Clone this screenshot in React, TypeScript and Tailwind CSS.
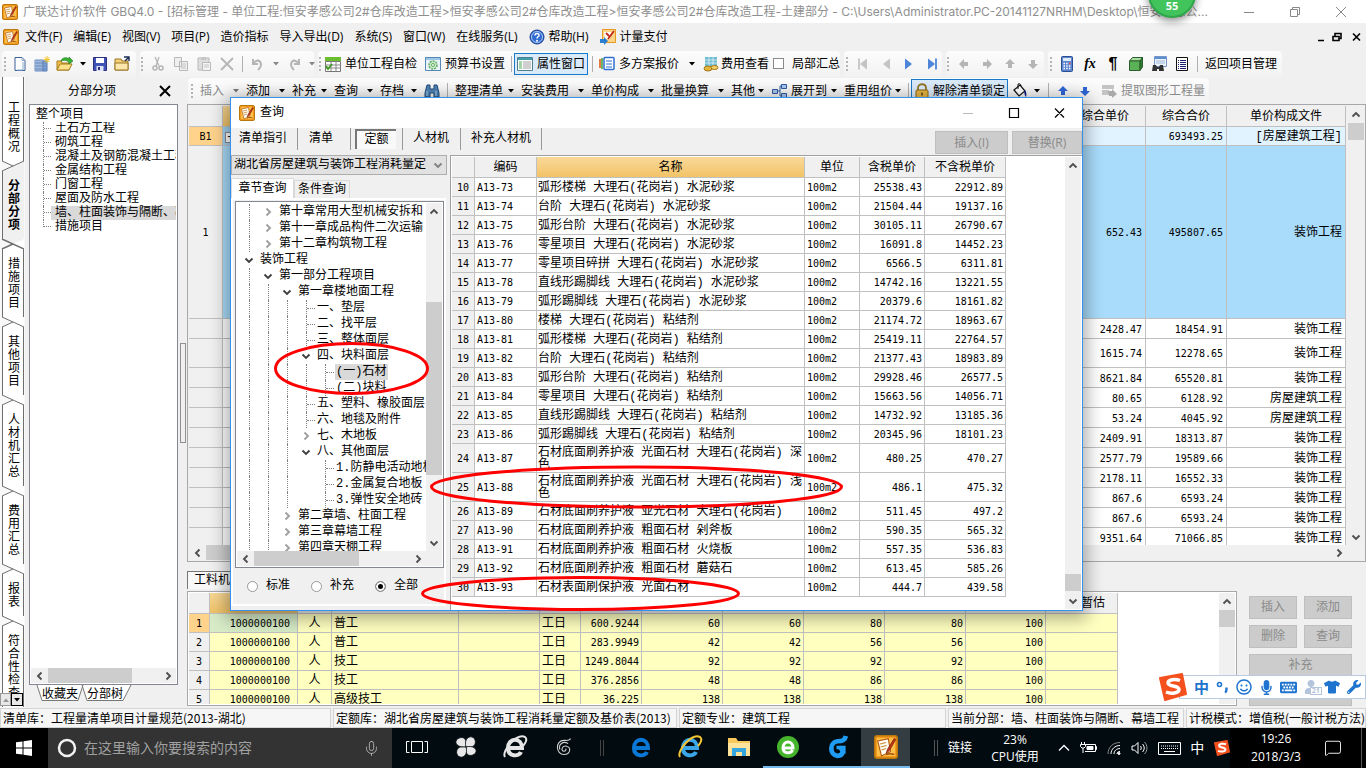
import React, { useState } from 'react';
import { FaMicrophone, FaKeyboard, FaTshirt, FaWrench, FaRegSmile, FaUser } from 'react-icons/fa';
import { MessageSquare, Mic } from 'lucide-react';

type Row = string[];

const song = "[font-family:'Liberation_Mono','Noto_Sans_CJK_SC',monospace]";
const num = "[font-family:'DejaVu_Sans_Mono','Noto_Sans_CJK_SC',monospace] text-[10px]";

const sections = ['土石方工程', '砌筑工程', '混凝土及钢筋混凝土工程', '金属结构工程', '门窗工程', '屋面及防水工程', '墙、柱面装饰与隔断、幕', '措施项目'];

const sideTabs = ['工程概况', '分部分项', '措施项目', '其他项目', '人材机汇总', '费用汇总', '报表', '符合性检查'];

const priceRows: Row[] = [
  ['2428.47', '18454.91', '装饰工程', 'h-[20px]'],
  ['1615.74', '12278.65', '装饰工程', 'h-[29px]'],
  ['8621.84', '65520.81', '装饰工程', 'h-[20px]'],
  ['80.65', '6128.92', '房屋建筑工程', 'h-[20px]'],
  ['53.24', '4045.92', '房屋建筑工程', 'h-[20px]'],
  ['2409.91', '18313.87', '装饰工程', 'h-[20px]'],
  ['2577.79', '19589.66', '装饰工程', 'h-[20px]'],
  ['2178.11', '16552.33', '装饰工程', 'h-[20px]'],
  ['867.6', '6593.24', '装饰工程', 'h-[20px]'],
  ['867.6', '6593.24', '装饰工程', 'h-[20px]'],
  ['9351.64', '71066.85', '装饰工程', 'h-[20px]'],
];

const quotas: Row[] = [
  ['10', 'A13-73', '弧形楼梯 大理石(花岗岩) 水泥砂浆', '25538.43', '22912.89'],
  ['11', 'A13-74', '台阶 大理石(花岗岩) 水泥砂浆', '21504.44', '19137.16'],
  ['12', 'A13-75', '弧形台阶 大理石(花岗岩) 水泥砂浆', '30105.11', '26790.67'],
  ['13', 'A13-76', '零星项目 大理石(花岗岩) 水泥砂浆', '16091.8', '14452.23'],
  ['14', 'A13-77', '零星项目碎拼 大理石(花岗岩) 水泥砂浆', '6566.5', '6311.81'],
  ['15', 'A13-78', '直线形踢脚线 大理石(花岗岩) 水泥砂浆', '14742.16', '13221.55'],
  ['16', 'A13-79', '弧形踢脚线 大理石(花岗岩) 水泥砂浆', '20379.6', '18161.82'],
  ['17', 'A13-80', '楼梯 大理石(花岗岩) 粘结剂', '21174.72', '18963.67'],
  ['18', 'A13-81', '弧形楼梯 大理石(花岗岩) 粘结剂', '25419.11', '22764.57'],
  ['19', 'A13-82', '台阶 大理石(花岗岩) 粘结剂', '21377.43', '18983.89'],
  ['20', 'A13-83', '弧形台阶 大理石(花岗岩) 粘结剂', '29928.46', '26577.5'],
  ['21', 'A13-84', '零星项目 大理石(花岗岩) 粘结剂', '15663.56', '14056.71'],
  ['22', 'A13-85', '直线形踢脚线 大理石(花岗岩) 粘结剂', '14732.92', '13185.36'],
  ['23', 'A13-86', '弧形踢脚线 大理石(花岗岩) 粘结剂', '20345.96', '18101.23'],
  ['24', 'A13-87', '石材底面刷养护液 光面石材 大理石(花岗岩) 深色', '480.25', '470.27'],
  ['25', 'A13-88', '石材底面刷养护液 光面石材 大理石(花岗岩) 浅色', '486.1', '475.32'],
  ['26', 'A13-89', '石材底面刷养护液 亚光石材 大理石(花岗岩)', '511.45', '497.2'],
  ['27', 'A13-90', '石材底面刷养护液 粗面石材 剁斧板', '590.35', '565.32'],
  ['28', 'A13-91', '石材底面刷养护液 粗面石材 火烧板', '557.35', '536.83'],
  ['29', 'A13-92', '石材底面刷养护液 粗面石材 蘑菇石', '613.45', '585.26'],
  ['30', 'A13-93', '石材表面刷保护液 光面石材', '444.7', '439.58'],
];

const labour: Row[] = [
  ['普工', '600.9244', '60', '60', '80', '80', '100'],
  ['普工', '283.9949', '42', '42', '56', '56', '100'],
  ['技工', '1249.8044', '92', '92', '92', '92', '100'],
  ['技工', '376.2856', '48', '48', '86', '86', '100'],
  ['高级技工', '36.225', '138', '138', '138', '138', '100'],
];

interface Node {
  level: number;
  label: string;
  state: 'open' | 'closed' | 'leaf';
  skip?: number; // ancestor level whose guide has ended
}

const chapters: Node[] = [
  { level: 1, label: '第十章常用大型机械安拆和', state: 'closed' },
  { level: 1, label: '第十一章成品构件二次运输', state: 'closed' },
  { level: 1, label: '第十二章构筑物工程', state: 'closed' },
  { level: 0, label: '装饰工程', state: 'open' },
  { level: 1, label: '第一部分工程项目', state: 'open' },
  { level: 2, label: '第一章楼地面工程', state: 'open' },
  { level: 3, label: '一、垫层', state: 'leaf' },
  { level: 3, label: '二、找平层', state: 'leaf' },
  { level: 3, label: '三、整体面层', state: 'leaf' },
  { level: 3, label: '四、块料面层', state: 'open' },
  { level: 4, label: '(一)石材', state: 'leaf' },
  { level: 4, label: '(二)块料', state: 'leaf' },
  { level: 3, label: '五、塑料、橡胶面层', state: 'leaf' },
  { level: 3, label: '六、地毯及附件', state: 'leaf' },
  { level: 3, label: '七、木地板', state: 'closed' },
  { level: 3, label: '八、其他面层', state: 'open' },
  { level: 4, label: '1.防静电活动地板', state: 'leaf', skip: 3 },
  { level: 4, label: '2.金属复合地板', state: 'leaf', skip: 3 },
  { level: 4, label: '3.弹性安全地砖', state: 'leaf', skip: 3 },
  { level: 2, label: '第二章墙、柱面工程', state: 'closed' },
  { level: 2, label: '第三章幕墙工程', state: 'closed' },
  { level: 2, label: '第四章天棚工程', state: 'closed' },
];

const AppLogo = ({ size = 16 }: { size?: number }) => (
  <svg width={size} height={size} viewBox="0 0 16 16" className="shrink-0">
    <rect x=".5" y=".5" width="15" height="15" rx="1.5" fill="#f59a1c" stroke="#b9770c" />
    <path d="M2 2h12v12H2z" fill="#fbc04a" />
    <path d="M2.5 4l7-1.5 1.5 8.5-6 3z" fill="#fffdf4" stroke="#b0560f" strokeWidth=".7" />
    <path d="M4 6l4-1M4.4 8l4-1M5 10l3-1" stroke="#c98b3a" strokeWidth=".8" />
    <path d="M13.5 2.2L9 9.5l-.8 2.6L10.5 10l4-7z" fill="#c4341c" stroke="#7d2208" strokeWidth=".5" />
    <path d="M8 13c2-.8 4-.5 5.500 0" stroke="#a4500a" fill="none" />
  </svg>
);

const Chevron = ({ dir, className = 'text-[#505050]' }: { dir: 'up' | 'down' | 'left' | 'right'; className?: string }) => {
  const d = { up: 'M1.500 6.500L5 3l3.500 3.500', down: 'M1.500 3.500L5 7l3.500-3.500', left: 'M6.500 1.500L3 5l3.500 3.500', right: 'M3.500 1.500L7 5 3.500 8.500' };
  return (
    <svg width="10" height="10" viewBox="0 0 10 10" className={`shrink-0 ${className}`}>
      <path d={d[dir]} fill="none" stroke="currentColor" strokeWidth="1.9" />
    </svg>
  );
};

const Arrow = ({ className = 'text-black' }: { className?: string }) => (
  <svg width="6" height="4" viewBox="0 0 6 4" className={`shrink-0 ${className}`}>
    <path d="M0 0h6L3 3.500z" fill="currentColor" />
  </svg>
);

const Grip = () => (
  <span className="flex flex-col gap-[2px] shrink-0 w-[2px]">
    {[0, 1, 2, 3].map(i => <span key={i} className="size-[2px] bg-[#b4b4b4]" />)}
  </span>
);

const Sep = () => <span className="w-px h-4 bg-[#b0b0b0] shrink-0" />;

const Svg = ({ children, className = '' }: { children: React.ReactNode; className?: string }) => (
  <svg width="16" height="16" viewBox="0 0 16 16" fill="none" className={`shrink-0 ${className}`}>{children}</svg>
);

const NewIcon = () => <Svg><path d="M3 1.500h7l3 3v10H3z" fill="#fff" stroke="#3a5f94" /><path d="M10 1.500v3h3M11 6v8H5" stroke="#8aa9cf" /></Svg>;
const BuildingIcon = () => <Svg><path d="M1 4h8v11H1z" fill="#d5e4f7" stroke="#6a8cc0" /><path d="M9 5h4v10H9z" fill="#7fa3d9" stroke="#5479b4" /><path d="M3 4v11M5 4v11M7 4v11M1 7h12M1 10h12M1 13h12" stroke="#6a8cc0" /><path d="M13 0v7M9.500 3.500h7M10.500 1l5 5M15.500 1l-5 5" stroke="#f2c52c" /></Svg>;
const OpenIcon = () => <svg width="18" height="16" viewBox="0 0 18 16" className="shrink-0"><path d="M1 14V5h4l1 2h7v7z" fill="#f0c04a" stroke="#a57a18" /><path d="M1 14l3-6h12l-3 6z" fill="#fde28c" stroke="#a57a18" /><path d="M5 5c1-4 6-4 8-2V1l4 4-4 3V6c-3-2-5-2-8-1z" fill="#37b332" stroke="#1b751b" strokeWidth=".6" /></svg>;
const SaveIcon = () => <Svg><path d="M1.500 1.500h13v13h-13z" fill="#4054b8" stroke="#2b2f80" /><path d="M4 2h8v5H4z" fill="#fff" /><path d="M4.500 10h7v5h-7z" fill="#dfe5f5" /><path d="M6 11h2v3H6z" fill="#2b2f80" /></Svg>;
const FolderIcon = () => <Svg><path d="M1 3h6l1 2h6v9H1z" fill="#f3d27c" stroke="#997422" /><path d="M1 7h13v7H1z" fill="#fbe7ab" stroke="#997422" /><path d="M10 1h5v4M15 1l-4 4" stroke="#1b2c55" strokeWidth="1.400" /></Svg>;
const CutIcon = () => <Svg><path d="M5 1l4 9M9 1L6 10" stroke="#b5b5b5" strokeWidth="1.300" /><circle cx="5" cy="12" r="2" stroke="#b5b5b5" strokeWidth="1.500" /><circle cx="11" cy="12" r="2" stroke="#b5b5b5" strokeWidth="1.500" /></Svg>;
const CopyIcon = () => <Svg><path d="M1.500 1.500h7v9h-7zM6.500 5.500h8v9h-8z" fill="#efefef" stroke="#b9b9b9" /><path d="M8 8h5M8 10h5M8 12h5" stroke="#c4c4c4" /></Svg>;
const PasteIcon = () => <Svg><path d="M2 2h11v12H2z" fill="#ddd" stroke="#b9b9b9" /><path d="M5 1h5v3H5z" fill="#c6c6c6" /><path d="M6.500 6.500h8v8h-8z" fill="#f4f4f4" stroke="#b9b9b9" /><path d="M8 9h5M8 11h5" stroke="#c4c4c4" /></Svg>;
const CheckTableIcon = () => <Svg><path d="M0 1h16v4H0z" fill="#6bbf2e" /><path d="M.5 5.500h15v10H.5z" fill="#fff" stroke="#777" /><path d="M1 9h15M1 12h15M6 5v10M11 5v10" stroke="#888" /><path d="M1 10l2 3 4-5" stroke="#3c9a1e" strokeWidth="1.800" /></Svg>;
const GearBookIcon = () => <Svg><path d="M.5 1.500h15v13H.5z" fill="#e8f3fb" stroke="#5688b4" /><path d="M1 2h14v2H1z" fill="#9cc5e6" /><circle cx="8" cy="9" r="4" fill="#cdeccc" stroke="#5daa5c" strokeWidth="1.500" strokeDasharray="2 1" /><circle cx="8" cy="9" r="1.500" fill="#fff" stroke="#5daa5c" /></Svg>;
const PropIcon = () => <Svg><path d="M.5 1.500h15v13H.5z" fill="#fff" stroke="#4e7f90" /><path d="M1 2h14v2H1z" fill="#3f9dab" /><path d="M2 6h3M2 8h3M2 10h3M2 12h3" stroke="#4ba854" /><path d="M6 6h8M6 8h8M6 10h8M6 12h8" stroke="#a0a0a0" /></Svg>;
const PlansIcon = () => <Svg><path d="M1 3v9" stroke="#e25b18" strokeWidth="1.600" /><path d="M3 2v11" stroke="#3fa03a" strokeWidth="1.500" /><rect x="5" y="1.500" width="10" height="12" rx="1" fill="#fff" stroke="#2f6fd0" strokeWidth="1.500" /><path d="M7 5h6M7 8h6M7 11h6" stroke="#2f6fd0" /></Svg>;
const FeeIcon = () => <Svg><path d="M2 1h12v9H2z" fill="#6fbcd2" /><path d="M2 4h12M2 7h12M6 1v9M10 1v9" stroke="#fff" strokeWidth=".6" /><ellipse cx="5" cy="12.500" rx="4" ry="2.500" fill="#e5b53c" stroke="#a37716" /><ellipse cx="11.500" cy="11.500" rx="3.500" ry="2" fill="#f4cf66" stroke="#a37716" /></Svg>;
const BinocularsIcon = () => <Svg><path d="M3 2h3v4h4V2h3l2 8v4h-5v-4H6v4H1v-4z" fill="#4f83b5" stroke="#204a78" /><path d="M3 8v5M12 8v5" stroke="#a7d1f0" /></Svg>;
const HelpIcon = () => <Svg><circle cx="8" cy="8" r="7" fill="#2f6bd0" stroke="#1b3f92" /><circle cx="8" cy="8" r="5.500" stroke="#cfe0fa" strokeWidth=".8" /><path d="M6 6.500c0-3 4.500-2.500 4 0-.3 1.300-2 1.300-2 3" stroke="#fff" strokeWidth="1.500" /><circle cx="8" cy="11.700" r="1" fill="#fff" /></Svg>;
const PayIcon = () => <Svg><path d="M2.500.5h13v13h-13z" fill="#fbd489" stroke="#e8991e" /><path d="M4 3h7l-1 7H5z" fill="#fff" /><path d="M14 2L8 10M6 4l3 3" stroke="#c12a1a" strokeWidth="1.800" /><path d="M0 10h4V8l4 4-4 4v-2H0z" fill="#2a7fd0" /></Svg>;
const NodesIcon = () => <Svg><path d="M1.500 6.500h5v4h-5zM10.500 1.500h5v4h-5zM10.500 10.500h5v4h-5z" fill="#a9c6ef" stroke="#2f5aa0" /><path d="M7 8h2V3h1M9 8v5h1" stroke="#2f5aa0" /></Svg>;
const LockIcon = () => <Svg><path d="M4 8V5c0-5 8-5 8 0v3" stroke="#94762a" strokeWidth="1.800" /><rect x="2" y="7" width="12" height="8" rx="1" fill="#e7b745" stroke="#8a6412" /><path d="M8 9.500v3" stroke="#5b4107" strokeWidth="1.500" /></Svg>;
const BucketIcon = () => <Svg><path d="M2 7l6-5 5 6-6 5z" fill="#fff" stroke="#111" strokeWidth="1.200" /><path d="M6 1v5M6 1c2-1 3 1 3 2" stroke="#111" /><path d="M12 7c3 1 2.500 5 2 7-1-1-2-4-2-7z" fill="#0c1a80" /></Svg>;
const CalcIcon = () => <Svg><rect x="2.500" y=".5" width="11" height="15" rx="1" fill="#5b86cf" stroke="#2b4d92" /><path d="M4 2h8v3H4z" fill="#dfeaf8" /><path d="M4.500 7.500h7M4.500 10h7M4.500 12.500h7" stroke="#fff" strokeWidth="1.500" strokeDasharray="1.500 1.200" /><path d="M10 7.500h1.500" stroke="#e33" strokeWidth="1.500" /></Svg>;
const CubeIcon = () => <Svg><path d="M1.500 5l3-3.500h10L12 5z" fill="#a8dba0" stroke="#2b5f2b" /><path d="M1.500 5H12v9.500H1.500z" fill="#5bb157" stroke="#2b5f2b" /><path d="M12 5l2.500-3.500V11L12 14.500z" fill="#2e7d33" stroke="#2b5f2b" /></Svg>;
const FindWinIcon = () => <Svg><path d="M3.500.5h12v10h-12z" fill="#eef4fb" stroke="#7597c8" /><path d="M4 1h11v2H4z" fill="#5f8ed0" /><path d="M5 5h9M5 7h9" stroke="#9db7d8" /><path d="M1 15l1-6h3l1 2h2l1-2h3l1 6H8v-2H6v2z" fill="#333" /></Svg>;
const ListIcon = () => <Svg><path d="M2.500 1.500h11v13h-11z" fill="#fff" stroke="#111" /><path d="M4 4.500h1M4 6.500h1M4 8.500h1M4 10.500h1M4 12.500h1M6 4.500h6M6 6.500h6M6 8.500h6M6 10.500h6M6 12.500h6" stroke="#1b1f70" /></Svg>;
const ExtractIcon = () => <Svg><path d="M1 2h12v4H1zM1 7h7v5H1z" fill="#c4c4c4" /><path d="M7 8h4v-2l5 5-5 4v-2H8z" fill="#aaa" /></Svg>;

const Block = ({ rotate, className }: { rotate: string; className: string }) => (
  <Svg className={className}><path d="M8 3l5 5h-3v4H6V8H3z" fill="currentColor" transform={rotate} /></Svg>
);

const Nav = ({ flip, bar, className }: { flip?: boolean; bar?: boolean; className: string }) => (
  <Svg className={className}>
    <g transform={flip ? 'translate(16 0) scale(-1 1)' : ''}>
      <path d="M4 2.500v11L11 8z" fill="currentColor" />
      {bar && <path d="M12 2.500v11" stroke="currentColor" strokeWidth="1.800" />}
    </g>
  </Svg>
);

const Menu = ({ label, width, disabled }: { label: string; width: string; disabled?: boolean }) => (
  <button className={`flex items-center justify-between shrink-0 pr-[7px] ${width} ${disabled ? 'text-[#8a8a8a]' : ''}`}>
    {label}
    <Arrow className={disabled ? 'text-[#777]' : 'text-black'} />
  </button>
);

const VBar = ({ before, thumb }: { before: string; thumb: string }) => (
  <div className="w-4 shrink-0 bg-[#f0f0f0] flex flex-col items-center">
    <span className="h-[17px] flex items-center"><Chevron dir="up" /></span>
    <span className={before} />
    <span className={`w-full bg-[#cdcdcd] ${thumb}`} />
    <span className="flex-1" />
    <span className="h-[17px] flex items-center"><Chevron dir="down" /></span>
  </div>
);

const HBar = ({ thumb }: { thumb: string }) => (
  <div className="h-[15px] shrink-0 bg-[#f0f0f0] flex items-center">
    <span className="w-[17px] flex justify-center"><Chevron dir="left" /></span>
    <span className={`h-full bg-[#cdcdcd] ${thumb}`} />
    <span className="flex-1" />
    <span className="w-[17px] flex justify-center"><Chevron dir="right" /></span>
  </div>
);

const TitleBar = () => (
  <div className="h-[23px] shrink-0 bg-white flex items-center pl-[2px] text-[#8f8f8f]">
    <AppLogo />
    <span className="ml-[5px] flex-1 truncate [font-family:'Inter','Noto_Sans_CJK_SC',sans-serif]">
      广联达计价软件 GBQ4.0 - [招标管理 - 单位工程:恒安孝感公司2#仓库改造工程&gt;恒安孝感公司2#仓库改造工程&gt;恒安孝感公司2#仓库改造工程-土建部分 - C:\Users\Administrator.PC-20141127NRHM\Desktop\恒安孝感公...
    </span>
    <div className="flex items-center gap-9 pl-4 pr-5">
      <svg width="10" height="10"><path d="M0 5.500h10" stroke="#888" /></svg>
      <svg width="10" height="10" fill="none" stroke="#888"><path d="M.5 2.500h7v7h-7zM2.500 2V.5h7v7H8" /></svg>
      <svg width="10" height="10" stroke="#888"><path d="M0 0l10 10M10 0L0 10" /></svg>
    </div>
  </div>
);

const MenuBar = () => (
  <div className="h-[27px] shrink-0 flex items-center pl-[3px] pr-[5px]">
    <AppLogo />
    <nav className="flex items-center gap-[11px] ml-[6px] whitespace-nowrap">
      {['文件(F)', '编辑(E)', '视图(V)', '项目(P)', '造价指标', '导入导出(D)', '系统(S)', '窗口(W)', '在线服务(L)'].map(m => (
        <button key={m}>{m}</button>
      ))}
      <button className="flex items-center gap-1"><HelpIcon />帮助(H)</button>
      <button className="flex items-center gap-1"><PayIcon />计量支付</button>
    </nav>
    <span className="flex-1" />
    <svg width="44" height="10" fill="none" stroke="#000" strokeWidth="1.600">
      <path d="M1 8.500h6M16 4.500h6v4h-6zM18 4V1.500h6v5h-1.500M36 1.500l7 7M43 1.500l-7 7" />
    </svg>
  </div>
);

const group = 'flex items-center h-[26px] rounded-sm bg-gradient-to-b from-[#fcfcfc] to-[#f2f2f2] shrink-0 whitespace-nowrap';

const MainToolbar = () => (
  <div className="h-[27px] shrink-0 flex items-center gap-1 pl-[2px] overflow-hidden">
    <div className={`${group} gap-[6px] w-[134px] pl-[2px]`}>
      <Grip /><NewIcon /><BuildingIcon /><OpenIcon /><Arrow /><SaveIcon /><FolderIcon />
    </div>
    <div className={`${group} gap-[7px] w-[174px] pl-px text-[#b5b5b5]`}>
      <Grip /><CutIcon /><CopyIcon /><PasteIcon />
      <Svg><path d="M2 2l12 12M14 2L2 14" stroke="currentColor" strokeWidth="1.800" /></Svg>
      <Sep />
      <Svg><path d="M3 3v5h5M3 8c5-8 12 0 5 6" stroke="currentColor" strokeWidth="2" /></Svg>
      <Arrow className="text-[#888]" />
      <Svg><path d="M13 3v5H8M13 8C8 0 1 8 8 14" stroke="currentColor" strokeWidth="2" /></Svg>
      <Arrow className="text-[#888]" />
    </div>
    <div className={`${group} w-[522px] pl-px`}>
      <Grip />
      <button className="flex items-center gap-1 ml-1"><CheckTableIcon />单位工程自检</button>
      <button className="flex items-center gap-1 ml-2"><GearBookIcon />预算书设置</button>
      <span className="w-[6px]" /><Sep />
      <button className="flex items-center gap-1 ml-[2px] h-[22px] px-[2px] bg-[#d9eafa] border border-[#1979ca]"><PropIcon />属性窗口</button>
      <span className="w-1" /><Sep />
      <button className="flex items-center gap-1 ml-[6px]"><PlansIcon />多方案报价<span className="w-[2px]" /><Arrow /></button>
      <button className="flex items-center gap-[2px] ml-2"><FeeIcon />费用查看</button>
      <label className="flex items-center gap-2 ml-1">
        <input type="checkbox" className="appearance-none size-[11px] border border-[#8a8a8a] bg-white" />局部汇总
      </label>
    </div>
    <div className={`${group} gap-[7px] w-[98px] pl-[2px]`}>
      <Grip />
      <Nav flip bar className="text-[#c4c4c4]" /><Nav flip className="text-[#c4c4c4]" />
      <Nav className="text-[#4d86d9]" /><Nav bar className="text-[#4d86d9]" />
    </div>
    <div className={`${group} gap-[7px] w-[98px] pl-px text-[#b5b5b5]`}>
      <Grip />
      <Block rotate="rotate(-90 8 8)" className="" /><Block rotate="rotate(90 8 8)" className="" />
      <Block rotate="" className="" /><Block rotate="rotate(180 8 8)" className="" />
    </div>
    <div className={`${group} gap-[7px] w-[234px] pl-[2px]`}>
      <Grip /><CalcIcon />
      <span className="w-4 text-center text-[14px] font-bold italic [font-family:'Liberation_Serif',serif]">fx</span>
      <span className="w-4 text-center text-[16px] font-bold [font-family:'Liberation_Sans',sans-serif]">¶</span>
      <CubeIcon /><FindWinIcon /><ListIcon /><Sep />
      <button>返回项目管理</button>
    </div>
  </div>
);

const EditToolbar = () => (
  <div className="h-[27px] shrink-0 flex items-center pl-px overflow-hidden">
    <div className={`${group} pl-[3px] pr-1`}>
      <Grip /><span className="w-[7px]" />
      <Menu label="插入" width="w-[46px]" disabled />
      <Menu label="添加" width="w-[46px]" />
      <Menu label="补充" width="w-[42px]" />
      <Menu label="查询" width="w-[46px]" />
      <Menu label="存档" width="w-[44px]" />
      <BinocularsIcon />
      <span className="w-[7px]" /><Sep /><span className="w-[7px]" />
      <Menu label="整理清单" width="w-[66px]" />
      <Menu label="安装费用" width="w-[70px]" />
      <Menu label="单价构成" width="w-[70px]" />
      <Menu label="批量换算" width="w-[70px]" />
      <Menu label="其他" width="w-[40px]" />
      <NodesIcon /><span className="w-1" />
      <Menu label="展开到" width="w-[53px]" />
      <Menu label="重用组价" width="w-[64px]" />
      <Sep />
      <button className="flex items-center gap-[3px] ml-[2px] h-[24px] px-[2px] border border-[#1979ca] bg-[#d9eafa]"><LockIcon />解除清单锁定</button>
      <span className="w-1" /><BucketIcon /><span className="w-[6px]" /><Arrow />
      <span className="w-2" /><Sep /><span className="w-[6px]" />
      <Block rotate="" className="text-[#2f66d6]" /><span className="w-[6px]" />
      <Block rotate="rotate(180 8 8)" className="text-[#2f66d6]" /><span className="w-2" />
      <button className="flex items-center gap-1 text-[#8a8a8a]"><ExtractIcon />提取图形工程量</button>
    </div>
  </div>
);

// slanted joint between two stacked side tabs
const Joint = ({ up, down }: { up?: boolean; down?: boolean }) => (
  <svg width="24" height="10" viewBox="0 0 24 10" className="shrink-0 block">
    <path d="M2 0L24 10V0z" fill={down ? '#f0f0f0' : '#fff'} />
    <path d="M2 10L24 0v10z" fill={up ? '#f0f0f0' : '#fff'} />
    <path d={up ? 'M2 0l11 5M2 10L24 0' : 'M2 0l22 10M2 10l11-5'} fill="none" stroke="#6e6e6e" strokeWidth={down ? 1.500 : 1} />
  </svg>
);

const SideTabs = () => {
  const [active, setActive] = useState(1);
  return (
    <div className="relative w-[25px] shrink-0 overflow-hidden bg-[#f8f8f8] flex flex-col">
      {sideTabs.map((t, i) => (
        <React.Fragment key={t}>
          {i > 0 && <Joint up={i === active} down={i - 1 === active} />}
          <button
            onClick={() => setActive(i)}
            className={`shrink-0 ml-[2px] w-[22px] px-[5px] pb-2 leading-[13px] break-all border-l border-[#6e6e6e] ${i === 0 ? 'pt-6' : 'pt-2'} ${i === active ? 'bg-[#f0f0f0] font-bold' : 'bg-white border-r'}`}
          >
            {t}
          </button>
        </React.Fragment>
      ))}
      <div className="absolute bottom-[2px] left-0 flex">
        <button className="w-[11px] h-[13px] bg-[#e8e8e8] border border-[#999] flex items-center justify-center" aria-label="上移"><Arrow className="rotate-180 text-[#999]" /></button>
        <button className="w-[12px] h-[13px] bg-[#e8e8e8] border border-black flex items-center justify-center" aria-label="下移"><Arrow /></button>
      </div>
    </div>
  );
};

const ProjectPanel = () => (
  <div className="w-[155px] shrink-0 flex flex-col pl-1 pb-[3px]">
    <div className="h-[27px] flex items-center justify-between pl-[39px] pr-[9px]">
      分部分项
      <svg width="12" height="12" stroke="#000" strokeWidth="2"><path d="M1 1l10 10M11 1L1 11" /></svg>
    </div>
    <div className={`flex-1 min-h-0 mr-[2px] bg-white border border-[#828790] flex flex-col p-px overflow-hidden leading-[14px] ${song}`}>
      <div className="pl-[5px] pt-[2px] whitespace-nowrap">整个项目</div>
      <ul className="flex-1 pl-[12px] overflow-hidden">
        {sections.map((s, i) => (
          <li key={s} className="flex whitespace-nowrap">
            <span className={`w-px shrink-0 border-l border-dotted border-[#808080] ${i === sections.length - 1 ? 'h-[7px]' : ''}`} />
            <span className="w-[7px] h-[7px] shrink-0 border-b border-dotted border-[#808080]" />
            <span className={`pl-[4px] shrink-0 ${i === 6 ? 'bg-[#d9d9d9]' : ''}`}>{s}</span>
          </li>
        ))}
      </ul>
      <HBar thumb="w-[84px]" />
    </div>
    <div className={`relative h-[20px] flex items-center pl-[13px] gap-[9px] ${song}`}>
      <svg width="110" height="17" className="absolute left-[7px] top-0" fill="#fff" stroke="#777">
        <path d="M1 0l5 15.500h36L47 0M46 0l5 15.500h36L95 0" />
      </svg>
      <button className="relative">收藏夹</button>
      <button className="relative">分部树</button>
    </div>
  </div>
);

const line = 'pt-[2px] border-r border-b border-[#c0c0c0]';

const BillGrid = () => (
  <div className="flex-1 min-h-0 flex flex-col border border-[#a8a8ac] bg-[#f0f0f0] p-px">
    <div className="flex-1 min-h-0 flex">
      <div className="flex-1 overflow-hidden bg-white">
        <table className={`w-full table-fixed border-separate border-spacing-0 leading-[14px] ${song}`}>
          <colgroup><col className="w-[34px]" /><col /><col className="w-[81px]" /><col className="w-[81px]" /><col className="w-[119px]" /></colgroup>
          <thead>
            <tr className="h-[21px] bg-[#f0f0f0]">
              <th className={line} />
              <th className={`bg-gradient-to-b from-[#f8d795] to-[#efc267] ${line}`} />
              {['综合单价', '综合合价', '单价构成文件'].map(h => <th key={h} className={`font-normal ${line}`}>{h}</th>)}
            </tr>
          </thead>
          <tbody>
            <tr className="h-[19px] bg-[#e1f3ff]">
              <td className={`bg-[#ffd38c] text-center ${num} ${line}`}>B1</td>
              <td className={`bg-[#a0d0f0] ${line}`}><span className="block size-[11px] leading-[9px] ml-[2px] border border-[#888] bg-white">-</span></td>
              <td className={line} />
              <td className={`text-right pr-[3px] ${num} ${line}`}>693493.25</td>
              <td className={`text-right pr-[3px] ${line}`}>[房屋建筑工程]</td>
            </tr>
            <tr className="h-[173px] bg-[#a9dcfb]">
              <td className={`bg-[#f0f0f0] text-center ${num} ${line}`}>1</td>
              <td className={line} />
              <td className={`text-right pr-[3px] ${num} ${line}`}>652.43</td>
              <td className={`text-right pr-[3px] ${num} ${line}`}>495807.65</td>
              <td className={`text-right pr-[3px] ${line}`}>装饰工程</td>
            </tr>
            {priceRows.map((r, i) => (
              <tr key={i} className={r[3]}>
                <td className={`bg-[#f0f0f0] ${line}`} />
                <td className={line} />
                <td className={`text-right pr-[3px] ${num} ${line}`}>{r[0]}</td>
                <td className={`text-right pr-[3px] ${num} ${line}`}>{r[1]}</td>
                <td className={`text-right pr-[3px] ${line}`}>{r[2]}</td>
              </tr>
            ))}
          </tbody>
        </table>
      </div>
      <span className="w-[2px]" />
      <VBar before="h-0" thumb="h-[17px]" />
    </div>
    <div className="pr-[17px]"><HBar thumb="w-[600px]" /></div>
  </div>
);

const greyBtn = 'h-[23px] bg-[#cccccc] border border-[#bfbfbf] text-[#8a8a8a]';

const ResourcePane = () => (
  <div className={`shrink-0 flex flex-col pt-[9px] pb-[2px] ${song}`}>
    <div className="h-[20px]">
      <button className="h-[18px] px-[6px] bg-[#f8f8f8] border-t border-l border-[#777] whitespace-nowrap">工料机显示</button>
    </div>
    <div className="flex gap-3 h-[115px]">
      <div className="flex-1 min-w-0 flex bg-white border border-[#a8a8ac] p-px">
        <div className="flex-1 overflow-hidden">
          <table className="w-[929px] table-fixed border-separate border-spacing-0 leading-[14px]">
            <colgroup>
              <col className="w-[21px]" /><col className="w-[88px]" /><col className="w-[34px]" /><col className="w-[127px]" /><col className="w-[81px]" /><col className="w-[41px]" />
              <col className="w-[61px]" /><col className="w-[81px]" /><col className="w-[81px]" /><col className="w-[81px]" /><col className="w-[81px]" /><col className="w-[80px]" /><col className="w-[72px]" />
            </colgroup>
            <thead>
              <tr className="h-[21px] bg-[#f0f0f0]">
                <th className={line} />
                <th className={`bg-gradient-to-b from-[#f8d795] to-[#efc267] font-normal ${line}`}>编码</th>
                {['类别', '名称', '规格', '单位', '数量', '', '', '', '', ''].map((h, i) => <th key={i} className={`font-normal ${line}`}>{h}</th>)}
                <th className={`font-normal text-right pr-3 ${line}`}>是否暂估</th>
              </tr>
            </thead>
            <tbody>
              {labour.map((r, i) => (
                <tr key={i} className="h-[19px] bg-[#ffffc0]">
                  <td className={`text-center ${num} ${line} ${i === 0 ? 'bg-[#ffd38c]' : 'bg-[#f0f0f0]'}`}>{i + 1}</td>
                  <td className={`text-right pr-[7px] ${num} ${line} ${i === 0 ? 'bg-[#d6ebc6]' : ''}`}>1000000100</td>
                  <td className={`text-center ${line}`}>人</td>
                  <td className={`pl-[2px] ${line}`}>{r[0]}</td>
                  <td className={line} />
                  <td className={`pl-[2px] ${line}`}>工日</td>
                  {r.slice(1).map((v, k) => <td key={k} className={`text-right pr-[2px] ${num} ${line}`}>{v}</td>)}
                  <td className={line} />
                </tr>
              ))}
            </tbody>
          </table>
        </div>
        <VBar before="h-0" thumb="h-[17px]" />
      </div>
      <div className="w-[117px] pt-[5px] overflow-hidden">
        <div className="w-[103px] grid grid-cols-2 gap-x-[7px] gap-y-[6px]">
          {['插入', '添加', '删除', '查询'].map(b => <button key={b} className={greyBtn}>{b}</button>)}
          <button className={`col-span-2 ${greyBtn}`}>补充</button>
          <button className={`col-span-2 ${greyBtn}`} aria-label="存档" />
        </div>
      </div>
    </div>
  </div>
);

const ChapterTree = () => {
  const [selected, setSelected] = useState('(一)石材');
  return (
    <ul className="flex-1 overflow-hidden pl-[3px] pt-px">
      {chapters.map(n => (
        <li key={n.label} className="flex h-4 items-center whitespace-nowrap" onClick={() => setSelected(n.label)}>
          {Array.from({ length: n.level }, (_, l) => (
            <span key={l} className="w-[19px] h-4 shrink-0 pl-[9px]">
              {l !== n.skip && <span className="block h-4 border-l border-dotted border-[#808080]" />}
            </span>
          ))}
          {n.state === 'leaf' ? (
            <span className="w-[19px] h-4 shrink-0 pl-[9px]">
              <span className="flex items-center h-4 border-l border-dotted border-[#808080]">
                <span className="w-2 border-t border-dotted border-[#808080]" />
              </span>
            </span>
          ) : (
            <span className="w-[19px] shrink-0 pl-1">
              <Chevron dir={n.state === 'open' ? 'down' : 'right'} className={n.state === 'open' ? 'text-[#404040]' : 'text-[#a0a0a0]'} />
            </span>
          )}
          <span className={`h-4 leading-4 pl-px ${selected === n.label ? 'bg-[#d9d9d9] pr-[2px]' : ''}`}>{n.label}</span>
        </li>
      ))}
    </ul>
  );
};

const QuotaGrid = () => (
  <div className="flex-1 min-w-0 flex bg-white border-t border-l border-[#a0a0a0] p-px">
    <div className="flex-1 overflow-hidden">
      <table className="w-[554px] table-fixed border-separate border-spacing-0">
        <colgroup>
          <col className="w-[23px]" /><col className="w-[62px]" /><col className="w-[268px]" /><col className="w-[55px]" /><col className="w-[65px]" /><col className="w-[81px]" />
        </colgroup>
        <thead>
          <tr className="h-[21px] bg-[#f0f0f0]">
            {['', '编码', '名称', '单位', '含税单价', '不含税单价'].map(h => (
              <th key={h} className={`font-normal ${line} ${h === '名称' ? 'bg-gradient-to-b from-[#f9d998] to-[#f2c366]' : ''}`}>{h}</th>
            ))}
          </tr>
        </thead>
        <tbody>
          {quotas.map(q => (
            <tr key={q[0]} className={q[2].length > 24 ? 'h-[29px]' : 'h-[19px]'}>
              <td className={`bg-[#f0f0f0] text-center ${num} ${line}`}>{q[0]}</td>
              <td className={`pl-[2px] ${num} ${line}`}>{q[1]}</td>
              <td className={`pl-px leading-[12px] ${line}`}>{q[2]}</td>
              <td className={`pl-[2px] ${num} ${line}`}>100m2</td>
              <td className={`text-right pr-[2px] ${num} ${line}`}>{q[3]}</td>
              <td className={`text-right pr-[2px] ${num} ${line}`}>{q[4]}</td>
            </tr>
          ))}
        </tbody>
      </table>
    </div>
    <VBar before="h-[400px]" thumb="h-[17px]" />
  </div>
);

const QueryDialog = () => {
  const [scope, setScope] = useState('全部');
  return (
    <div role="dialog" aria-label="查询" className={`absolute left-[230px] top-[97px] w-[853px] h-[514px] flex flex-col bg-[#f0f0f0] border border-[#3492ec] shadow-[0_4px_16px_4px_rgba(0,0,0,0.32)] leading-[14px] ${song}`}>
      <div className="h-[30px] shrink-0 bg-white flex items-center pl-2 pr-[17px]">
        <AppLogo />
        <h2 className="ml-[5px] flex-1">查询</h2>
        <svg width="102" height="11" fill="none" stroke="#000">
          <path d="M0 5.500h10" stroke="#bbb" /><path d="M46.500.5h9v9h-9zM92 .5l9 9M101 .5l-9 9" strokeWidth="1.200" />
        </svg>
      </div>
      <div className="h-[27px] shrink-0 flex items-start whitespace-nowrap">
        <div className="flex items-center h-[22px]">
          <button className="h-full pl-[8px] pr-[10px] border-r border-[#999]">清单指引</button>
          <button className="h-full pl-[11px] pr-[17px] border-r border-[#999]">清单</button>
          <button className="ml-1 h-5 w-[41px] bg-[#f9f9f9] border-t-2 border-l-2 border-[#777]">定额</button>
          <button className="ml-[6px] h-full pl-[10px] pr-[11px] border-x border-[#999]">人材机</button>
          <button className="h-full px-[10px] border-r border-[#999]">补充人材机</button>
        </div>
        <span className="flex-1" />
        <div className="flex gap-1 pt-[3px] [font-family:'Open_Sans','Noto_Sans_CJK_SC',sans-serif]">
          <button className={`w-[73px] ${greyBtn}`}>插入(I)</button>
          <button className={`w-[70px] ${greyBtn}`}>替换(R)</button>
        </div>
      </div>
      <div className="flex-1 min-h-0 flex">
        <div className="w-[219px] shrink-0 flex flex-col">
          <div className="relative w-[216px]">
            <select aria-label="定额库" className="appearance-none block w-full h-5 pl-[2px] bg-[#e1e1e1] border border-[#adadad]">
              <option>湖北省房屋建筑与装饰工程消耗量定</option>
            </select>
            <span className="absolute right-1 top-[5px] pointer-events-none"><Chevron dir="down" className="text-[#808080]" /></span>
          </div>
          <div className="flex items-end mt-[3px]">
            <button className="w-[63px] h-[20px] bg-white border border-b-0 border-[#d9d9d9]">章节查询</button>
            <button className="w-[56px] h-[18px] border border-b-0 border-[#d9d9d9]">条件查询</button>
          </div>
          <div className="flex-1 min-h-0 flex flex-col mr-1 mb-1 border-2 border-white">
            <div className="flex-1 min-h-0 ml-[2px] mt-px flex flex-col bg-white border border-[#828790] p-px">
              <div className="flex-1 min-h-0 flex">
                <ChapterTree />
                <VBar before="h-[82px]" thumb="h-[173px]" />
              </div>
              <div className="bg-[#f0f0f0] pr-4"><HBar thumb="w-[105px]" /></div>
            </div>
            <div className="h-[36px] shrink-0 flex items-center gap-[21px] pl-[14px]">
              {['标准', '补充', '全部'].map(s => (
                <label key={s} className="flex items-center gap-2">
                  <input
                    type="radio"
                    name="scope"
                    checked={scope === s}
                    onChange={() => setScope(s)}
                    className="appearance-none size-[11px] rounded-full border border-[#999] bg-white checked:bg-black checked:shadow-[inset_0_0_0_2px_#fff]"
                  />
                  {s}
                </label>
              ))}
            </div>
          </div>
        </div>
        <QuotaGrid />
      </div>
    </div>
  );
};

const Marks = () => (
  <svg className="absolute inset-0 size-full pointer-events-none" fill="none" stroke="#ff0000" strokeWidth="3">
    <ellipse cx="351.500" cy="368.500" rx="76" ry="25" />
    <ellipse cx="636.500" cy="487" rx="205" ry="20" />
    <ellipse cx="580.500" cy="593.500" rx="158" ry="16" />
  </svg>
);

const SogouLogo = ({ size }: { size: number }) => (
  <svg width={size} height={size} viewBox="0 0 28 28" className="shrink-0">
    <path d="M1 5L23 1l4 20-21 6z" fill="#f4511e" stroke="#f4511e" strokeWidth="2" strokeLinejoin="round" />
    <path d="M21 7.500c-5-2-12-1-12 2.500 0 4 11 2 11 6.500 0 4-8 4.500-13 2.500" fill="none" stroke="#fff" strokeWidth="3.500" />
  </svg>
);

const ImeBar = () => (
  <div className="absolute right-0 bottom-[67px] flex items-center">
    <div className="relative z-10 -mr-2"><SogouLogo size={28} /></div>
    <div className="h-[24px] w-[187px] pl-[14px] pr-1 flex items-center justify-between bg-white border border-[#b9cbe0] text-[#1f74cf]">
      <span className="text-[15px] font-bold">中</span>
      <svg width="14" height="14" fill="none" stroke="currentColor" strokeWidth="1.600"><circle cx="3.500" cy="4.500" r="2" /><path d="M10.500 7.500v2c0 1.500-.5 2.500-1.500 3" strokeWidth="2.400" /></svg>
      <FaRegSmile size={16} />
      <FaMicrophone size={15} />
      <FaKeyboard size={17} />
      <span className="relative text-[#b4c4dd]">
        <FaUser size={14} />
        <span className="absolute left-[6px] top-[7px] px-px bg-white border border-[#b4c4dd] text-[7px] leading-[6px] font-bold">21</span>
      </span>
      <FaTshirt size={16} />
      <FaWrench size={14} />
    </div>
  </div>
);

const StatusBar = () => (
  <footer className="h-[20px] shrink-0 flex gap-[2px] whitespace-nowrap leading-[18px] [font-family:'Noto_Sans_CJK_SC',sans-serif] *:border *:border-[#d4d4d4] *:pl-[2px] *:bg-[#f6f6f6] *:overflow-hidden">
    <span className="w-[331px]">清单库：工程量清单项目计量规范(2013-湖北)</span>
    <span className="w-[344px]">定额库：湖北省房屋建筑与装饰工程消耗量定额及基价表(2013)</span>
    <span className="flex-1">定额专业：建筑工程</span>
    <span className="w-[236px]">当前分部：墙、柱面装饰与隔断、幕墙工程</span>
    <span className="w-[180px]">计税模式：增值税(一般计税方法)</span>
  </footer>
);

const Swirl = ({ size, inner }: { size: number; inner: boolean }) => (
  <svg width={size} height={size} viewBox="0 0 24 24" fill="none">
    {inner ? (
      <path d="M20 2c-2 3-5 2-8 2C1 4 2 21 12 21c8 0 9-9 3-10-6-1-7 6-3 6 2 0 3-2 2-3M17 8c-6-4-12 1-10 7" stroke="#d0d0d0" strokeWidth="1.300" />
    ) : (
      <>
        <path d="M21 1c-1 5-5 5-8 5-8 1-8 13 0 14 6 0 6-6 2-8" stroke="#1f9cf3" strokeWidth="4.500" />
        <path d="M12 12h7v6" stroke="#1f9cf3" strokeWidth="3.500" />
      </>
    )}
  </svg>
);

const EMark = ({ color, ring }: { color: string; ring?: string }) => (
  <svg width="26" height="26" viewBox="0 0 26 26" fill="none">
    <path d="M6 14h14c0-11-14-11-14 0 0 9 11 9 13 4" stroke={color} strokeWidth="4" />
    {ring && <path d="M3 23C-1 17 15-1 23 3c3 2 0 7-2 9" stroke={ring} strokeWidth="2" />}
  </svg>
);

const cell = 'w-[49px] h-full shrink-0 flex items-center justify-center border-b-2';

const Taskbar = () => (
  <div className="h-[40px] shrink-0 flex items-center bg-[#020c10] text-white whitespace-nowrap">
    <button className="w-12 h-full bg-black flex items-center justify-center" aria-label="开始">
      <svg width="16" height="16" fill="#fff"><path d="M0 2.300l6.500-.9v6.100H0zM7.500 1.200L16 0v7.500H7.500zM0 8.500h6.500v6.100L0 13.700zM7.500 8.500H16V16l-8.500-1.200z" /></svg>
    </button>
    <label className="w-[344px] h-full bg-[#333] flex items-center gap-[7px] pl-[9px] pr-3">
      <svg width="20" height="20" className="shrink-0"><circle cx="10" cy="10" r="8" fill="none" stroke="#f2f2f2" strokeWidth="2.500" /></svg>
      <input placeholder="在这里输入你要搜索的内容" className="flex-1 min-w-0 bg-transparent text-[14px] outline-none placeholder:text-[#a0a0a0]" />
      <Mic size={17} strokeWidth={1.200} className="text-[#bbb]" />
    </label>
    <button className={`${cell} border-transparent`} aria-label="任务视图">
      <svg width="22" height="16" fill="none" stroke="#fff"><path d="M5.500 2.500h11v11h-11zM3.500 2.500h-3v11h3M18.500 2.500h3v11h-3" /></svg>
    </button>
    <button className={`${cell} border-transparent`} aria-label="搜狗">
      <svg width="22" height="22" viewBox="0 0 22 22" fill="#e8e8e8" stroke="#020c10" strokeWidth=".8">
        <path d="M11 11C4 12 0 8 1 5s8-6 10 0z" /><path d="M11 11c-2-7 2-11 6-10s5 8 0 10z" />
        <path d="M11 11c7-2 11 2 10 5s-8 6-10 0z" /><path d="M11 11c2 7-2 11-6 10s-5-8 0-10z" />
      </svg>
    </button>
    <button className={`${cell} border-transparent`} aria-label="浏览器"><EMark color="#e6e6e6" ring="#e6e6e6" /></button>
    <button className={`${cell} border-transparent`} aria-label="广联达"><Swirl size={20} inner /></button>
    <span className="w-7 flex justify-center gap-[2px]"><span className="w-px h-4 bg-[#444]" /><span className="w-px h-4 bg-[#444]" /></span>
    <button className={`${cell} border-transparent`} aria-label="Edge"><EMark color="#0a78d7" /></button>
    <button className={`${cell} border-transparent`} aria-label="IE"><EMark color="#3aa5e8" ring="#f5c634" /></button>
    <button className={`${cell} border-transparent`} aria-label="文件资源管理器">
      <svg width="22" height="20"><path d="M0 1h8l2 3h12v15H0z" fill="#f7c95c" /><path d="M0 6h22v13H0z" fill="#fde39b" /><path d="M4 19v-8h14v8h-4v-4H8v4z" fill="#35a5de" /></svg>
    </button>
    <button className={`${cell} border-[#76b9ed]`} aria-label="360">
      <svg width="24" height="24"><circle cx="12" cy="12" r="11" fill="#46b52c" /><path d="M7 13h10c0-8-10-8-10 0 0 6 8 6 9.500 2" fill="none" stroke="#fff" strokeWidth="3" /></svg>
    </button>
    <button className={`${cell} border-[#76b9ed]`} aria-label="广联达G"><Swirl size={25} inner={false} /></button>
    <button className={`${cell} border-[#76b9ed] bg-[#343d42]`} aria-label="计价软件"><AppLogo size={24} /></button>
    <span className="flex-1" />
    <span className="w-px h-4 bg-[#555]" /><span className="ml-[2px] w-px h-4 bg-[#555]" />
    <span className="ml-[10px]">链接</span>
    <div className="w-[60px] ml-[13px] text-center leading-[17px]">23%<br />CPU使用</div>
    <div className="flex items-center justify-between w-[172px] ml-[13px]">
      <svg width="12" height="12" fill="none" stroke="#fff"><path d="M1 8.500l5-5 5 5" strokeWidth="1.300" /></svg>
      <svg width="18" height="14" fill="none" stroke="#fff">
        <path d="M4 3.500h11.500v7H5M15.500 5.500h1v3h-1" /><path d="M7 5.500h6v3H7z" fill="#fff" />
        <path d="M1.500 1v2M4.500 1v2M.5 3.500h5v2l-1.500 1.500H2L.5 5.500zM3 7v5" fill="#020c10" />
      </svg>
      <svg width="14" height="14" fill="none" stroke="#fff">
        <path d="M1 13C1 6 6 1.500 13 1.500" stroke="#888" /><path d="M4 13c0-5 4-8.500 9-8.500M7 13c0-3 2.500-5.500 6-5.500M10 13c0-1.500 1-2.500 3-2.500" /><circle cx="12" cy="12.500" r="1" fill="#fff" />
      </svg>
      <svg width="17" height="14" fill="none" stroke="#fff">
        <path d="M1 5h2.500L7 1.500v11L3.500 9H1zM9.500 5c1 1.300 1 2.700 0 4M11.500 3c2.300 2.500 2.300 5.500 0 8" /><path d="M13.500 1c3.300 3.500 3.300 8.500 0 12" stroke="#999" />
      </svg>
      <svg width="23" height="13" fill="none" stroke="#fff">
        <path d="M.5.5h22v12H.5z" /><path d="M3 4h17M3 6.500h17" strokeDasharray="1 1" /><path d="M6 9.500h11" />
      </svg>
      <span className="text-[14px]">中</span>
      <SogouLogo size={16} />
    </div>
    <div className="h-full w-[136px] bg-black flex items-center pl-[14px]">
      <div className="w-[64px] text-center leading-[18px]">19:26<br />2018/3/3</div>
      <MessageSquare size={18} strokeWidth={1.200} className="ml-[16px]" />
      <span className="flex-1" />
      <span className="w-px h-full bg-[#555] mr-1" />
    </div>
  </div>
);

const App: React.FC = () => (
  <div className="relative h-screen flex flex-col overflow-hidden bg-[#f0f0f0] text-black text-[12px] leading-4 [font-family:'Open_Sans','Noto_Sans_CJK_SC',sans-serif]">
    <TitleBar />
    <MenuBar />
    <MainToolbar />
    <div className="flex-1 min-h-0 flex">
      <SideTabs />
      <ProjectPanel />
      <div className="w-[7px] shrink-0 flex items-center">
        <span className="w-[6px] h-[100px] border border-[#909090]" />
      </div>
      <main className="flex-1 min-w-0 flex flex-col">
        <EditToolbar />
        <BillGrid />
        <ResourcePane />
      </main>
    </div>
    <StatusBar />
    <Taskbar />
    <QueryDialog />
    <Marks />
    <ImeBar />
    <div className="absolute top-[-30px] right-[170px] size-[48px] rounded-full bg-[#42c45c] border-2 border-[#2fa64a] shadow-[0_3px_8px_rgba(0,0,0,0.45)] flex items-end justify-center text-white font-bold text-[11px] pb-[2px]">
      55
    </div>
  </div>
);

export default App;
